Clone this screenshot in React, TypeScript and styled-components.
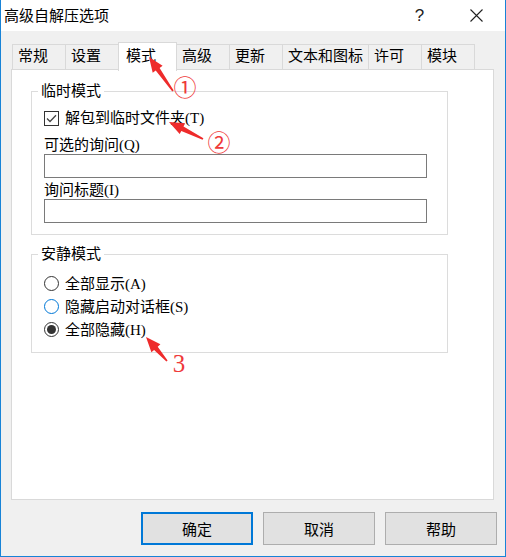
import styled, { createGlobalStyle } from 'styled-components';

const GlobalStyle = createGlobalStyle`
  html, body {
    margin: 0;
    padding: 0;
    background: #ffffff;
  }

  body {
    font-family: "Liberation Serif", "Noto Sans CJK SC", serif;
    font-size: 15px;
    color: #000000;
  }
`;

const cjk = `"Liberation Serif", "Noto Sans CJK SC", serif`;

export const Window = styled.div`
  position: relative;
  box-sizing: border-box;
  width: 506px;
  height: 557px;
  display: flex;
  flex-direction: column;

  border: 1px solid #1883d7;
  border-top: none;
`;

export const TitleBar = styled.div`
  display: flex;
  align-items: center;
  height: 31px;
  flex-shrink: 0;

  background: #ffffff;
  padding-left: 3px;
`;

export const Title = styled.span`
  flex: 1;
  font-family: ${cjk};
  font-size: 15px;
  line-height: 31px;
  padding-top: 2px;
`;

export const TitleControl = styled.div`
  display: flex;
  align-items: center;
  justify-content: center;
  width: 57px;
  height: 31px;

  font-family: "Liberation Sans", sans-serif;
  font-size: 17px;
  color: #222222;
`;

export const Client = styled.div`
  flex: 1;
  display: flex;
  flex-direction: column;

  background: #f0f0f0;
  padding: 11px 11px 0 10px;
`;

export const TabRow = styled.div`
  display: flex;
  align-items: flex-end;
  height: 27px;
  padding-left: 1px;
`;

export const Tab = styled.div<{ $active?: boolean }>`
  position: relative;
  box-sizing: border-box;
  min-width: ${(p) => (p.$active ? '59px' : '54px')};
  height: ${(p) => (p.$active ? '29px' : '25px')};
  margin-left: -1px;
  margin-bottom: ${(p) => (p.$active ? '-2px' : '0')};
  z-index: ${(p) => (p.$active ? 1 : 0)};

  padding: ${(p) => (p.$active ? '2px 5px 0 7px' : '0 5px')};
  border: 1px solid #d9d9d9;
  border-bottom: none;
  background: ${(p) => (p.$active ? '#ffffff' : '#f0f0f0')};

  font-size: 15px;
  line-height: 23px;
  white-space: nowrap;

  &:first-child {
    margin-left: 0;
  }
`;

export const Panel = styled.div`
  box-sizing: border-box;
  height: 431px;

  background: #ffffff;
  border: 1px solid #d9d9d9;
  padding: 12px 0 0 19px;
`;

export const Group = styled.fieldset<{ $gap?: number }>`
  box-sizing: border-box;
  width: 417px;
  min-width: 0;
  margin: ${(p) => p.$gap || 0}px 0 0 0;
  padding: 9px 0 11px 12px;

  border: 1px solid #dcdcdc;
`;

export const GroupTitle = styled.legend`
  margin-left: -6px;
  padding: 0 3px;

  font-size: 15px;
  line-height: 18px;
`;

export const CheckRow = styled.label`
  display: flex;
  align-items: center;
  gap: 6px;
  height: 18px;
  line-height: 18px;
`;

export const CheckBox = styled.span`
  box-sizing: border-box;
  display: flex;
  align-items: center;
  justify-content: center;
  width: 15px;
  height: 15px;

  background: #ffffff;
  border: 1px solid #333333;
`;

export const FieldLabel = styled.div<{ $gap: number }>`
  height: 18px;
  margin-top: ${(p) => p.$gap}px;
  line-height: 18px;
`;

export const TextBox = styled.div`
  box-sizing: border-box;
  width: 383px;
  height: 24px;

  background: #ffffff;
  border: 1px solid #7a7a7a;
`;

export const RadioList = styled.div`
  display: flex;
  flex-direction: column;
`;

export const RadioRow = styled.label`
  display: flex;
  align-items: center;
  gap: 6px;
  height: 23px;
  line-height: 18px;
`;

export const RadioDot = styled.span<{ $checked?: boolean; $hover?: boolean }>`
  box-sizing: border-box;
  display: flex;
  align-items: center;
  justify-content: center;
  width: 15px;
  height: 15px;

  border-radius: 50%;
  background: #ffffff;
  border: 1px solid ${(p) => (p.$hover ? '#0078d7' : '#333333')};

  &::after {
    content: '';
    display: ${(p) => (p.$checked ? 'block' : 'none')};
    width: 9px;
    height: 9px;
    border-radius: 50%;
    background: #333333;
  }
`;

export const ButtonRow = styled.div`
  display: flex;
  justify-content: flex-end;
  gap: 10px;
  margin: 12px -3px 0 0;
`;

export const Button = styled.div<{ $default?: boolean }>`
  box-sizing: border-box;
  display: flex;
  align-items: center;
  justify-content: center;
  width: 112px;
  height: 33px;

  background: #e1e1e1;
  border: ${(p) => (p.$default ? '2px solid #0078d7' : '1px solid #adadad')};

  font-size: 15px;
`;

export const Overlay = styled.svg`
  position: absolute;
  left: 0;
  top: 0;
  z-index: 5;
  pointer-events: none;
`;

const tabs = ['常规', '设置', '模式', '高级', '更新', '文本和图标', '许可', '模块'];

type Pt = [number, number];

// red callout arrow from tail to tip, shaft widening toward the head
const arrowPoints = (tail: Pt, tip: Pt, headLen = 15, headW = 12) => {
  const dx = tip[0] - tail[0];
  const dy = tip[1] - tail[1];
  const len = Math.hypot(dx, dy);
  const ux = dx / len;
  const uy = dy / len;
  const px = -uy;
  const py = ux;
  const bx = tip[0] - ux * headLen;
  const by = tip[1] - uy * headLen;
  const side = (x: number, y: number, w: number, s: number) =>
    `${(x + px * w * s).toFixed(1)},${(y + py * w * s).toFixed(1)}`;
  return [
    side(tail[0], tail[1], 0.8, 1),
    side(bx, by, 2.4, 1),
    side(bx, by, headW / 2, 1),
    `${tip[0]},${tip[1]}`,
    side(bx, by, headW / 2, -1),
    side(bx, by, 2.4, -1),
    side(tail[0], tail[1], 0.8, -1),
  ].join(' ');
};

const CloseIcon = () => (
  <svg width="13" height="13" viewBox="0 0 13 13">
    <path d="M0.5 0.5 L12.5 12.5 M12.5 0.5 L0.5 12.5" stroke="#222" strokeWidth="1.1" />
  </svg>
);

const CheckMark = () => (
  <svg width="11" height="9" viewBox="0 0 11 9">
    <path d="M1 4.5 L4 7.5 L10 1.2" fill="none" stroke="#444" strokeWidth="1.3" />
  </svg>
);

export default function App() {
  return (
    <>
      <GlobalStyle />
      <Window>
        <TitleBar>
          <Title>高级自解压选项</Title>
          <TitleControl>?</TitleControl>
          <TitleControl>
            <CloseIcon />
          </TitleControl>
        </TitleBar>

        <Client>
          <TabRow>
            {tabs.map((t) => (
              <Tab key={t} $active={t === '模式'}>
                {t}
              </Tab>
            ))}
          </TabRow>

          <Panel>
            <Group>
              <GroupTitle>临时模式</GroupTitle>
              <CheckRow>
                <CheckBox>
                  <CheckMark />
                </CheckBox>
                解包到临时文件夹(T)
              </CheckRow>
              <FieldLabel $gap={9}>可选的询问(Q)</FieldLabel>
              <TextBox />
              <FieldLabel $gap={3}>询问标题(I)</FieldLabel>
              <TextBox />
            </Group>

            <Group $gap={10}>
              <GroupTitle>安静模式</GroupTitle>
              <RadioList>
                <RadioRow>
                  <RadioDot />
                  全部显示(A)
                </RadioRow>
                <RadioRow>
                  <RadioDot $hover />
                  隐藏启动对话框(S)
                </RadioRow>
                <RadioRow>
                  <RadioDot $checked />
                  全部隐藏(H)
                </RadioRow>
              </RadioList>
            </Group>
          </Panel>

          <ButtonRow>
            <Button $default>确定</Button>
            <Button>取消</Button>
            <Button>帮助</Button>
          </ButtonRow>
        </Client>

        <Overlay width="506" height="557">
          <polygon points={arrowPoints([172, 91], [148, 57])} fill="#ee2b2b" />
          <polygon points={arrowPoints([202, 139], [168, 122])} fill="#ee2b2b" />
          <polygon points={arrowPoints([166, 361], [145, 337])} fill="#ee2b2b" />
          <text x="184" y="96" fontSize="23" fill="#ef3a3a" textAnchor="middle" fontFamily='"Noto Sans CJK SC", sans-serif'>
            ①
          </text>
          <text x="218" y="151" fontSize="23" fill="#ef3a3a" textAnchor="middle" fontFamily='"Noto Sans CJK SC", sans-serif'>
            ②
          </text>
          <text x="178" y="372" fontSize="25" fill="#ef3a3a" textAnchor="middle" fontFamily='"Liberation Serif", serif'>
            3
          </text>
        </Overlay>
      </Window>
    </>
  );
}
